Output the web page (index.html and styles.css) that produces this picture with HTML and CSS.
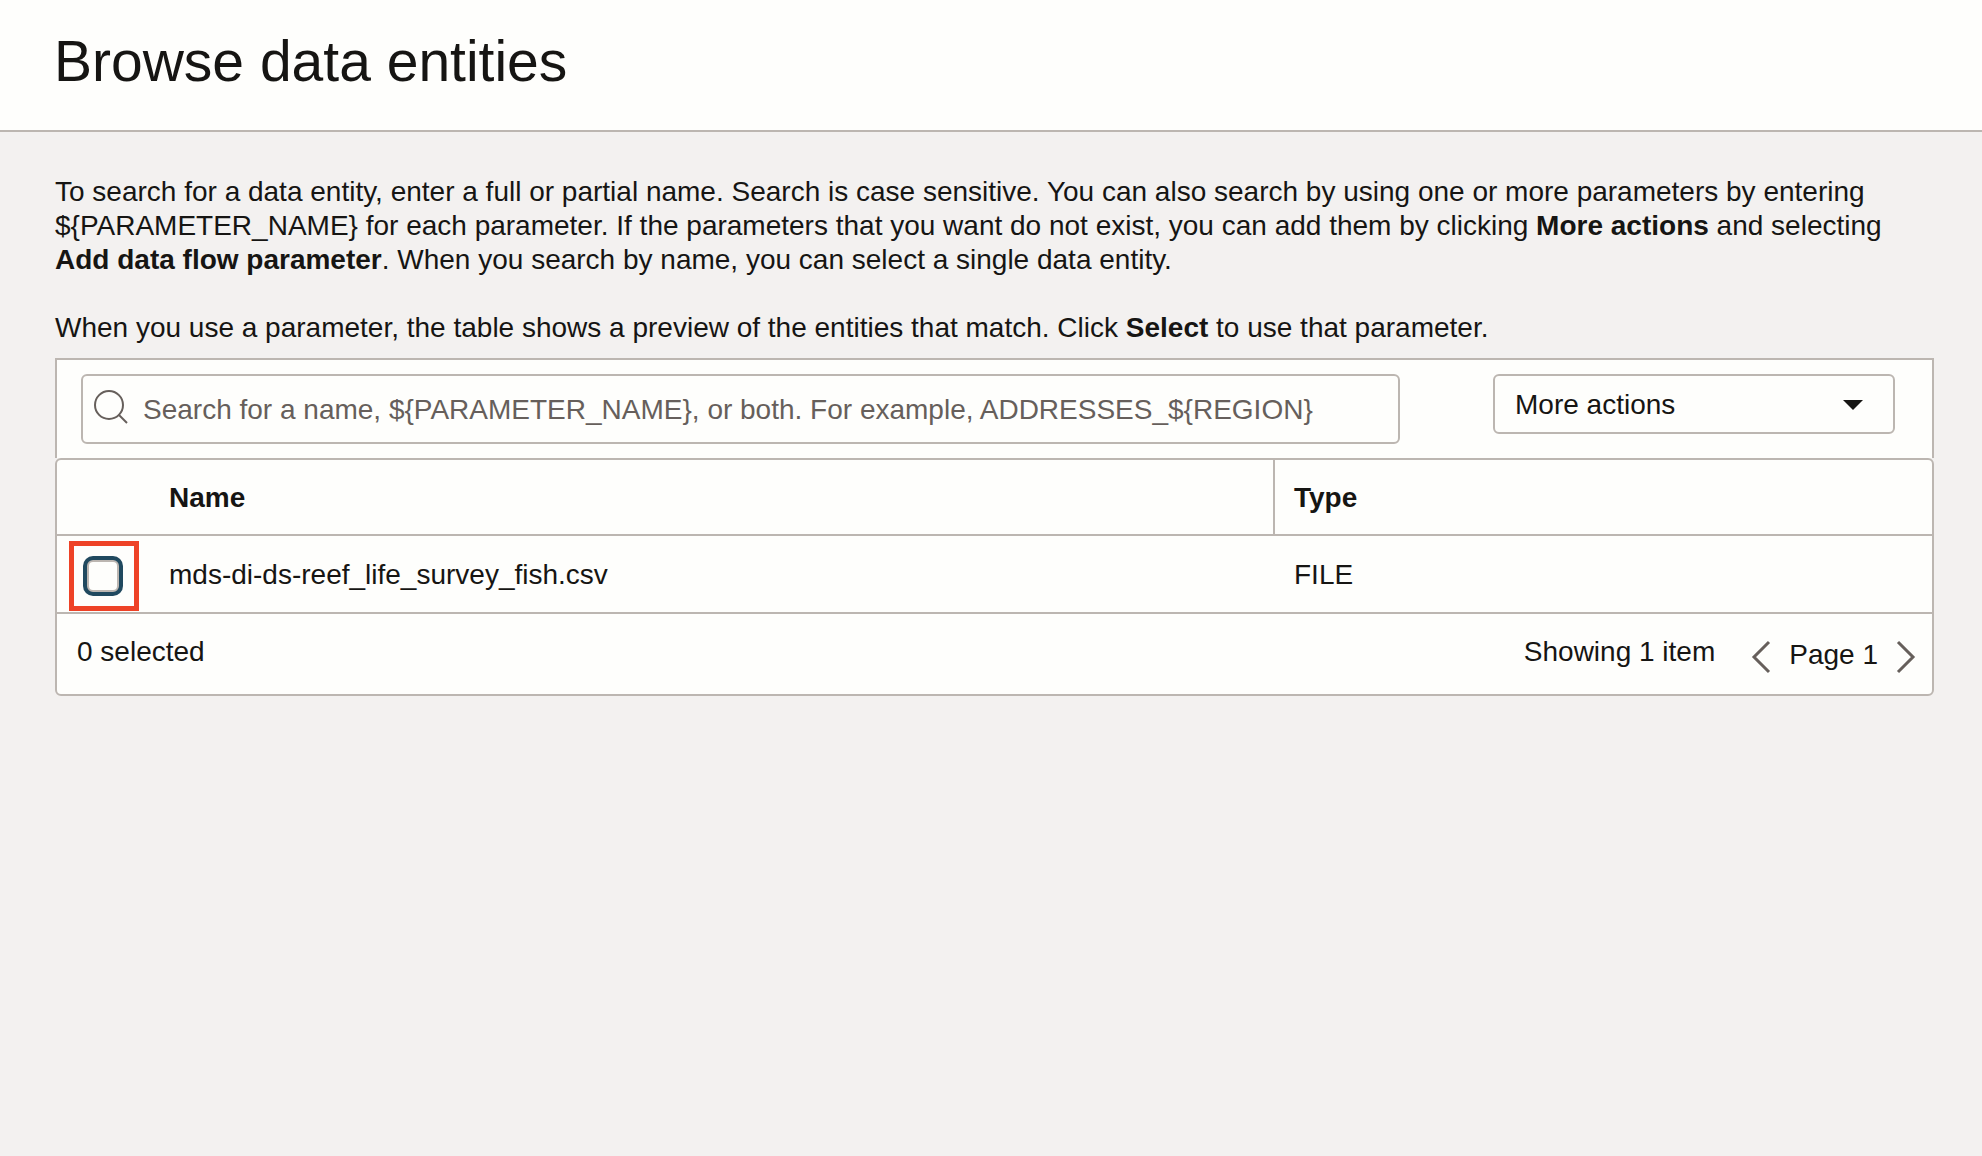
FILE: index.html
```html
<!DOCTYPE html>
<html lang="en">
<head>
<meta charset="utf-8">
<title>Browse data entities</title>
<link rel="stylesheet" href="styles.css">
</head>
<body>
<header class="page-header">
  <h1 class="page-title">Browse data entities</h1>
</header>
<main class="content">
  <div class="intro">
    <p>To search for a data entity, enter a full or partial name. Search is case sensitive. You can also search by using one or more parameters by entering ${PARAMETER_NAME} for each parameter. If the parameters that you want do not exist, you can add them by clicking <b>More actions</b> and selecting <b>Add data flow parameter</b>. When you search by name, you can select a single data entity.</p>
    <p>When you use a parameter, the table shows a preview of the entities that match. Click <b>Select</b> to use that parameter.</p>
  </div>
  <div class="toolbar">
    <label class="search">
      <svg class="search-icon" width="36" height="36" viewBox="0 0 36 36" fill="none" stroke="currentColor" stroke-width="2" aria-hidden="true">
        <circle cx="16" cy="16" r="14"/>
        <path d="M25.5 25.5L34 34"/>
      </svg>
      <input class="search-input" type="text" aria-label="Search data entities" placeholder="Search for a name, ${PARAMETER_NAME}, or both. For example, ADDRESSES_${REGION}">
    </label>
    <div class="actions">
      <select class="actions-select" aria-label="More actions">
        <option>More actions</option>
      </select>
      <svg class="caret" width="20" height="10" viewBox="0 0 20 10" aria-hidden="true"><path d="M0 0H20L10 10Z" fill="currentColor"/></svg>
    </div>
  </div>
  <div class="panel">
    <table class="entities">
      <colgroup><col class="col-check"><col><col class="col-type"></colgroup>
      <thead>
        <tr><td></td><th class="name-head" scope="col">Name</th><th scope="col">Type</th></tr>
      </thead>
      <tbody>
        <tr>
          <td class="check-cell"><span class="highlight"><input class="check" type="checkbox" id="entity-1"></span></td>
          <td><label for="entity-1">mds-di-ds-reef_life_survey_fish.csv</label></td>
          <td>FILE</td>
        </tr>
      </tbody>
    </table>
    <footer class="table-footer">
      <span class="selected">0 selected</span>
      <span class="showing">Showing 1 item</span>
      <nav class="pager" aria-label="Pagination">
        <button class="page-button" type="button" aria-label="Previous page">
          <svg width="20" height="34" viewBox="0 0 20 34" fill="none" stroke="currentColor" stroke-width="3"><path d="M18 2L3 17L18 32"/></svg>
        </button>
        <span class="page-label">Page 1</span>
        <button class="page-button" type="button" aria-label="Next page">
          <svg width="20" height="34" viewBox="0 0 20 34" fill="none" stroke="currentColor" stroke-width="3"><path d="M2 2L17 17L2 32"/></svg>
        </button>
      </nav>
    </footer>
  </div>
</main>
</body>
</html>
```

FILE: styles.css
```css
:root {
  --text: #161513;
  --muted: #665f5b;
  --line: #bcb6b1;
  --surface: #fefefc;
}

* {
  box-sizing: border-box;
}

body {
  margin: 0;
  min-height: 100vh;
  background: #f3f1f0;
  color: var(--text);
  font: 28px/34px "Liberation Sans", Arial, sans-serif;
}

input,
select,
button {
  font: inherit;
  color: inherit;
}

.page-header {
  padding: 27px 54px 35px;
  background: var(--surface);
  border-bottom: 2px solid var(--line);
}

.page-title {
  margin: 0;
  font-size: 57px;
  line-height: 68px;
  font-weight: 400;
}

.content {
  padding: 43px 48px 43px 55px;
}

.intro {
  display: grid;
  gap: 34px;
  margin-bottom: 13px;
}

.intro p {
  margin: 0;
}

.toolbar {
  display: flex;
  align-items: flex-start;
  gap: 93px;
  padding: 14px 37px 14px 24px;
  background: var(--surface);
  border: 2px solid var(--line);
  border-bottom: 0;
}

.search {
  flex: 1;
  display: flex;
  align-items: center;
  gap: 14px;
  height: 70px;
  padding: 0 10px;
  border: 2px solid var(--line);
  border-radius: 6px;
}

.search-icon {
  flex: none;
  margin-bottom: 4px;
  color: var(--muted);
}

.search-input {
  flex: 1;
  min-width: 0;
  padding: 2px 0 0;
  border: 0;
  background: none;
  outline: 0;
}

.search-input::placeholder {
  color: var(--muted);
  opacity: 1;
}

.actions {
  display: grid;
  align-items: center;
  width: 402px;
}

.actions > * {
  grid-area: 1 / 1;
}

.actions-select {
  appearance: none;
  width: 100%;
  height: 60px;
  padding: 2px 60px 0 20px;
  background: none;
  border: 2px solid var(--line);
  border-radius: 6px;
}

.caret {
  justify-self: end;
  margin: 2px 32px 0 0;
  pointer-events: none;
}

.panel {
  background: var(--surface);
  border: 2px solid var(--line);
  border-radius: 6px;
}

.entities {
  width: 100%;
  table-layout: fixed;
  border-collapse: separate;
  border-spacing: 0;
}

.col-check {
  width: 93px;
}

.col-type {
  width: 657px;
}

.entities th,
.entities td {
  padding: 21px 19px 19px;
  text-align: left;
  border-bottom: 2px solid var(--line);
}

.entities .name-head {
  border-right: 2px solid var(--line);
}

.entities .check-cell {
  padding: 5px 0 1px 12px;
}

.highlight {
  display: grid;
  place-items: center;
  width: 70px;
  height: 70px;
  padding-right: 2px;
  border: 5px solid #ee4226;
}

.check {
  appearance: none;
  width: 32px;
  height: 32px;
  margin: 0;
  border: 2px solid var(--line);
  border-radius: 6px;
  background: var(--surface);
  box-shadow: 0 0 0 4px #20495f;
}

.check:checked {
  background: #20495f;
}

.table-footer {
  display: flex;
  align-items: flex-start;
  padding: 21px 16px 20px 20px;
}

.selected {
  flex: 1;
}

.pager {
  display: flex;
  align-items: center;
  gap: 18px;
  margin-left: 36px;
  padding-top: 1px;
}

.page-button {
  display: flex;
  padding: 4px 0 0;
  border: 0;
  background: none;
  color: var(--muted);
}
```
